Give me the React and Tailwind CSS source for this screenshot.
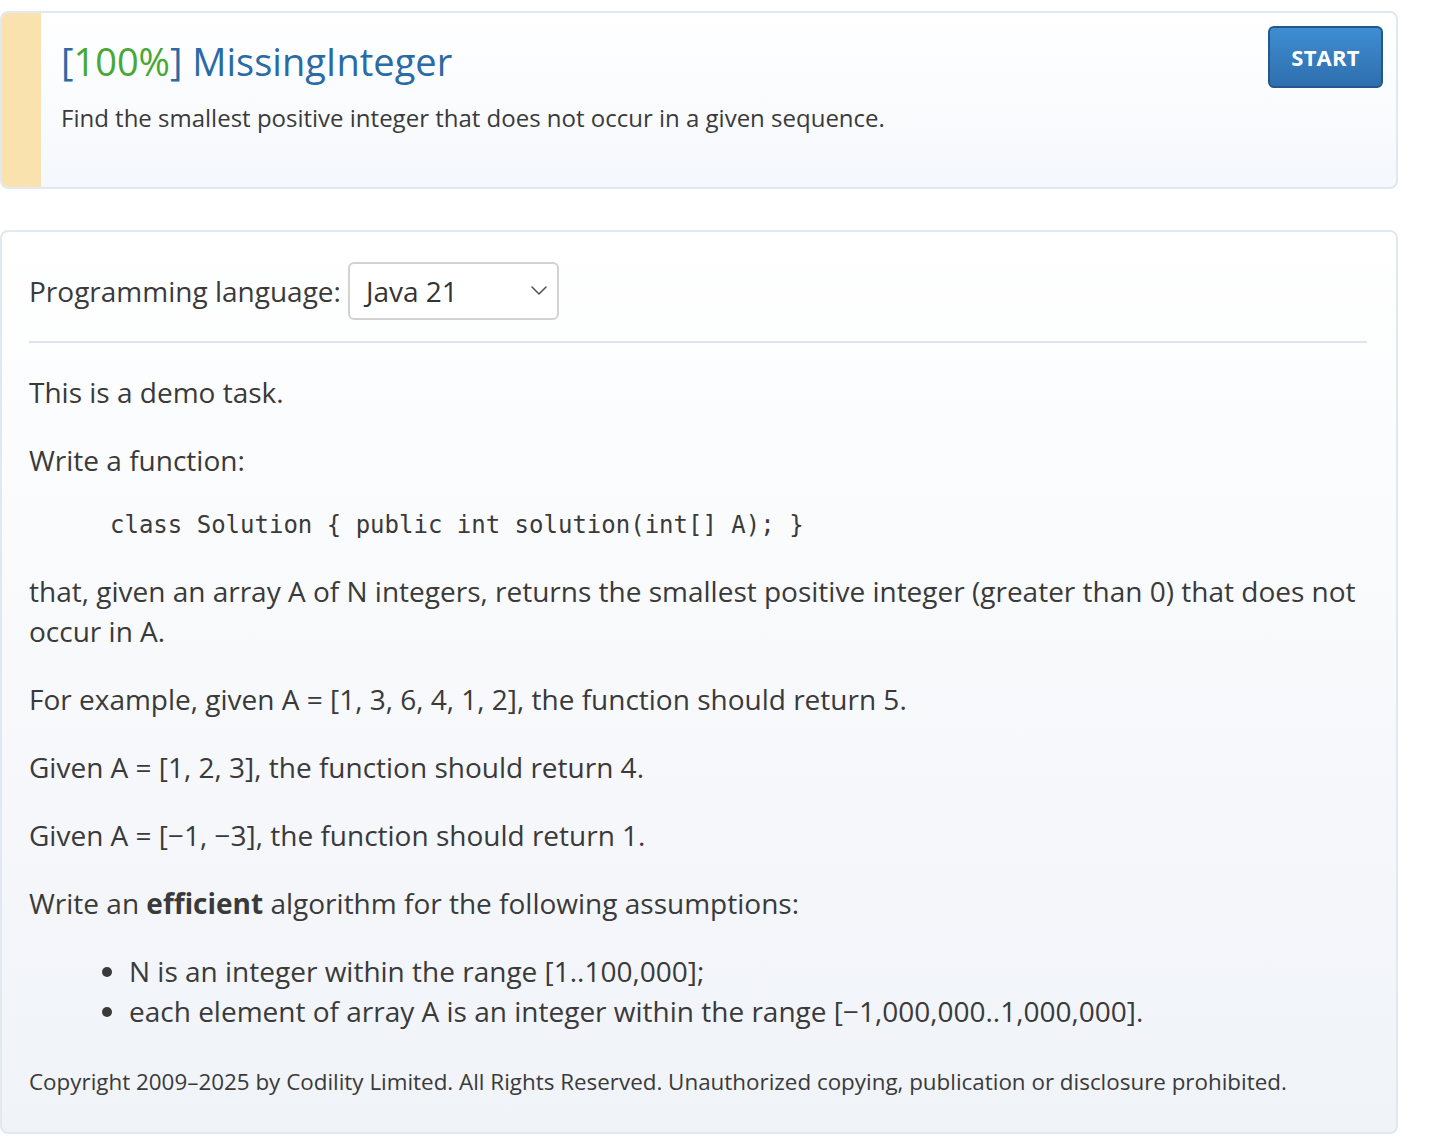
export default function App() {
  const font = { fontFamily: '"Open Sans", "Liberation Sans", sans-serif' };
  return (
    <div className="w-[1432px] min-h-[1146px] bg-white text-[#333]" style={font}>
      <div className="pt-[11px]">
        {/* Card 1 */}
        <div className="w-[1398px] h-[178px] flex border-2 border-[#e1e8f0] rounded-[8px] overflow-hidden bg-gradient-to-b from-[#ffffff] to-[#f5f8fc]">
          <div className="w-[39px] shrink-0 bg-[#fae2ae]" />
          <div className="flex-1 flex justify-between pl-[20px] pr-[13px]">
            <div className="pt-[26px]">
              <div className="text-[38px] leading-[44px] text-[#2a6aa5]">
                [<span className="text-[#48a834]">100%</span>] MissingInteger
              </div>
              <div className="mt-[15px] text-[24px] leading-[40px] text-[#3a3a3a]">
                Find the smallest positive integer that does not occur in a given sequence.
              </div>
            </div>
            <div className="pt-[13px]">
              <button className="w-[115px] h-[62px] rounded-[6px] border-2 border-[#24578a] bg-gradient-to-b from-[#3e8dd2] to-[#2f6fae] text-white font-bold text-[22px] tracking-[0.2px]">
                START
              </button>
            </div>
          </div>
        </div>

        {/* Card 2 */}
        <div className="mt-[41px] w-[1398px] border-2 border-[#e1e8f0] rounded-[8px] bg-gradient-to-b from-[#ffffff] to-[#f0f3f8] pl-[27px] pr-[29px] pt-[30px] pb-[34px] text-[#3a3a3a]">
          <div className="flex items-center">
            <span className="text-[28px] leading-[40px] mr-[7px]">Programming language:</span>
            <div className="relative w-[211px] h-[58px] border-2 border-[#d2d2d2] rounded-[6px] bg-white flex items-center pl-[16px]">
              <span className="text-[28px] leading-[40px] text-[#333]">Java 21</span>
              <svg className="absolute right-[9px] top-[20px]" width="18" height="12" viewBox="0 0 18 12">
                <path d="M2 3 L9 10 L16 3" fill="none" stroke="#555" strokeWidth="1.6" strokeLinecap="round" strokeLinejoin="round" />
              </svg>
            </div>
          </div>
          <div className="mt-[21px] h-[2px] bg-[#dde4ec]" />

          <div className="text-[28px] leading-[40px]">
            <p className="mt-[29px]">This is a demo task.</p>
            <p className="mt-[28px]">Write a function:</p>
            <div
              className="mt-[27px] ml-[81px] text-[24px] leading-[36px] text-[#3a3a3a]"
              style={{ fontFamily: '"DejaVu Sans Mono", "Liberation Mono", monospace' }}
            >
              class Solution {"{"} public int solution(int[] A); {"}"}
            </div>
            <p className="mt-[28px]">
              that, given an array A of N integers, returns the smallest positive integer (greater than 0) that does not occur in A.
            </p>
            <p className="mt-[28px]">For example, given A = [1, 3, 6, 4, 1, 2], the function should return 5.</p>
            <p className="mt-[28px]">Given A = [1, 2, 3], the function should return 4.</p>
            <p className="mt-[28px]">Given A = [−1, −3], the function should return 1.</p>
            <p className="mt-[28px]">
              Write an <b className="font-bold">efficient</b> algorithm for the following assumptions:
            </p>
            <ul className="mt-[28px] list-disc pl-[100px]">
              <li>N is an integer within the range [1..100,000];</li>
              <li>each element of array A is an integer within the range [−1,000,000..1,000,000].</li>
            </ul>
          </div>
          <div className="mt-[35px] text-[22.4px] leading-[32px] text-[#3a3a3a]">
            Copyright 2009–2025 by Codility Limited. All Rights Reserved. Unauthorized copying, publication or disclosure prohibited.
          </div>
        </div>
      </div>
    </div>
  );
}
